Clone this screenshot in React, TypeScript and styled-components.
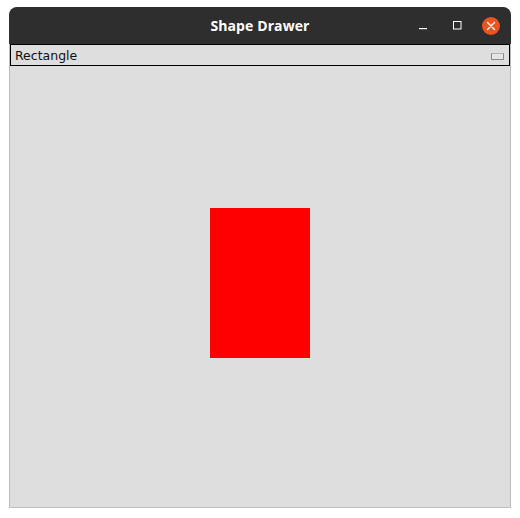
import React from "react";
import styled, { createGlobalStyle } from "styled-components";

const Global = createGlobalStyle`
  html, body { margin: 0; padding: 0; background: #ffffff; }
  body { font-family: "DejaVu Sans", sans-serif; }
`;

const Page = styled.div`
  padding: 7px 0 0 9px;
`;

const Window = styled.div`
  width: 502px;
  height: 501px;
  display: flex;
  flex-direction: column;
  border-radius: 8px 8px 0 0;
  overflow: hidden;
  background: #dedede;
`;

const TitleBar = styled.div`
  height: 37px;
  flex: none;
  background: #2f2e2e;
  position: relative;
  display: flex;
  align-items: center;
  justify-content: center;
`;

const Title = styled.span`
  font-family: "Open Sans", "DejaVu Sans", sans-serif;
  font-weight: 700;
  font-size: 14px;
  color: #ffffff;
  letter-spacing: 0.1px;
`;

const Controls = styled.div`
  position: absolute;
  right: 10px;
  top: 0;
  height: 37px;
  display: flex;
  align-items: center;
  gap: 14px;
`;

const CtrlButton = styled.div`
  width: 20px;
  height: 37px;
  display: flex;
  align-items: center;
  justify-content: center;
`;

const CloseCircle = styled.div`
  width: 18px;
  height: 18px;
  border-radius: 50%;
  background: #e95420;
  display: flex;
  align-items: center;
  justify-content: center;
`;

const Body = styled.div`
  flex: 1;
  display: flex;
  flex-direction: column;
  border: 1px solid #bdbdbd;
  border-top: none;
`;

const Combo = styled.div`
  height: 20px;
  flex: none;
  border: 1px solid #000000;
  background: #dedede;
  display: flex;
  align-items: center;
  justify-content: space-between;
  padding: 0 5px 0 4px;
`;

const ComboText = styled.span`
  font-family: "DejaVu Sans", sans-serif;
  font-size: 12.5px;
  color: #111111;
`;

const ComboArrow = styled.div`
  width: 11px;
  height: 5px;
  border: 1px solid #8a8a8a;
  border-top-color: #b0b0b0;
  background: #e4e4e4;
  margin-top: 2px;
`;

const Canvas = styled.div`
  flex: 1;
  position: relative;
  background: #dedede;
`;

const Shape = styled.div<{ $color: string }>`
  position: absolute;
  background: ${(p) => p.$color};
`;

export default function App() {
  return (
    <>
      <Global />
      <Page>
        <Window>
          <TitleBar>
            <Title>Shape Drawer</Title>
            <Controls>
              <CtrlButton>
                <svg width="9" height="9" viewBox="0 0 9 9">
                  <rect x="0" y="7" width="8" height="1.2" fill="#ffffff" />
                </svg>
              </CtrlButton>
              <CtrlButton>
                <svg width="9" height="9" viewBox="0 0 9 9">
                  <rect x="0.5" y="0.5" width="7.5" height="7.5" fill="none" stroke="#ffffff" strokeWidth="1" />
                </svg>
              </CtrlButton>
              <CtrlButton>
                <CloseCircle>
                  <svg width="10" height="10" viewBox="0 0 10 10">
                    <path d="M1.5 1.5 L8.5 8.5 M8.5 1.5 L1.5 8.5" stroke="#ffffff" strokeWidth="1.4" strokeLinecap="round" />
                  </svg>
                </CloseCircle>
              </CtrlButton>
            </Controls>
          </TitleBar>
          <Body>
            <Combo>
              <ComboText>Rectangle</ComboText>
              <ComboArrow />
            </Combo>
            <Canvas>
              <Shape $color="#ff0000" style={{ left: 200, top: 142, width: 100, height: 150 }} />
            </Canvas>
          </Body>
        </Window>
      </Page>
    </>
  );
}
